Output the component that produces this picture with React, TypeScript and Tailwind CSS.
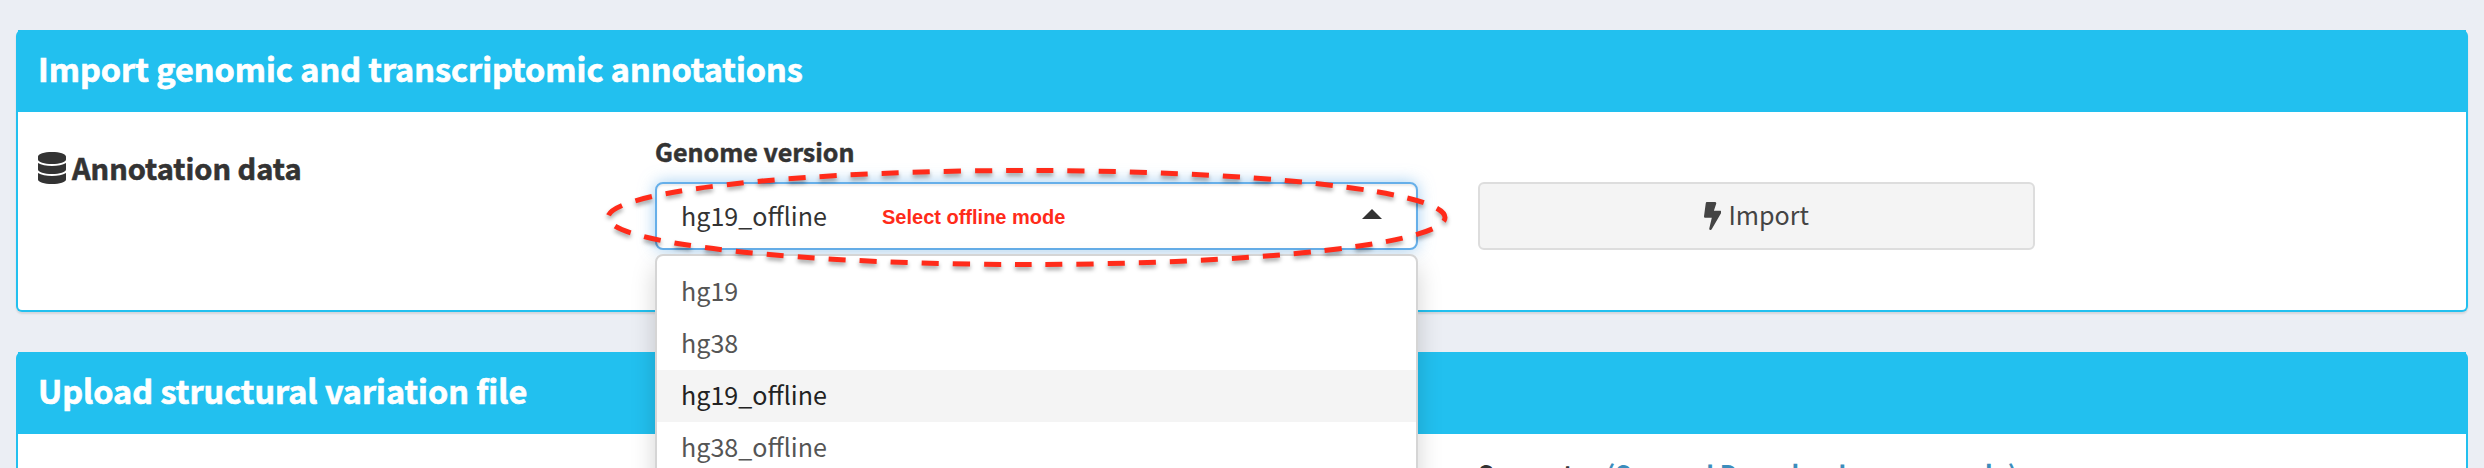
import { FaBolt, FaDatabase } from "react-icons/fa";

const options = ["hg19", "hg38", "hg19_offline", "hg38_offline"];

function BoxHeader({ title }: { title: string }) {
  return (
    <header className="flex h-[82px] items-center bg-[#22c0ef] pb-[6px] pl-5">
      <h3 className="text-[32.4px] leading-[40px] font-bold whitespace-nowrap text-white [-webkit-text-stroke:0.7px_white]">{title}</h3>
    </header>
  );
}

function GenomeSelect() {
  return (
    <div className="relative h-[68px] w-[763px]">
      <div className="flex h-full items-center justify-between rounded-lg border-2 border-[#66afe9] bg-white pr-[34px] pl-6 shadow-[inset_0_2px_2px_rgba(0,0,0,0.075),0_0_16px_rgba(102,175,233,0.6)]">
        <span className="-mt-[3px] text-[25.1px] leading-[40px]">hg19_offline</span>
        <svg className="-mt-[5px] h-[10px] w-5" viewBox="0 0 20 10">
          <path d="M0 10L10 0L20 10Z" fill="#333" />
        </svg>
      </div>
      <ul className="absolute top-[72px] left-0 z-10 w-full rounded-lg border-2 border-[#d5d5d5] bg-white pt-[10px] pb-[10px] shadow-[0_12px_24px_rgba(0,0,0,0.175)]">
        {options.map((o) => (
          <li
            key={o}
            className={
              o === "hg19_offline"
                ? "flex h-[52px] items-center bg-[#f4f4f4] pb-[2px] pl-6 text-[25.1px] text-[#222]"
                : "flex h-[52px] items-center pb-[2px] pl-6 text-[25.1px] text-[#555]"
            }
          >
            {o}
          </li>
        ))}
      </ul>
      <span className="absolute top-[23px] left-[227px] font-['Liberation_Sans',sans-serif] text-[20px] leading-6 font-bold whitespace-nowrap text-[#ff2b1a]">
        Select offline mode
      </span>
      <svg className="absolute -top-[22px] -left-[58px] z-20 h-[120px] w-[860px] drop-shadow-[0_3px_2px_rgba(0,0,0,0.35)]" viewBox="597 160 860 120">
        <ellipse
          cx="1026.5"
          cy="217.5"
          rx="418.5"
          ry="47"
          fill="none"
          stroke="#ff2b1a"
          strokeWidth="5"
          pathLength="55"
          strokeDasharray="0.55 0.45"
          strokeDashoffset="0.42"
        />
      </svg>
    </div>
  );
}

export default function App() {
  return (
    <div className="flex h-[468px] w-full flex-col gap-10 overflow-hidden bg-[#ebeef4] px-4 pt-[30px] font-['Noto_Sans_CJK_SC',sans-serif] text-[#333]">
      <section className="relative z-10 h-[282px] shrink-0 rounded-md border-2 border-t-0 border-[#22c0ef] bg-white shadow-[0_2px_2px_rgba(0,0,0,0.1)]">
        <BoxHeader title="Import genomic and transcriptomic annotations" />
        <div className="flex pl-5">
          <div className="flex w-[617px] items-start pt-[35px]">
            <FaDatabase className="mt-[5px] h-8 w-7" />
            <h4 className="ml-[6px] text-[29px] leading-[40px] font-bold [-webkit-text-stroke:0.6px_#333]">Annotation data</h4>
          </div>
          <div className="w-[823px] pt-[19px]">
            <label className="mb-[11px] block text-[25px] leading-[40px] font-bold [-webkit-text-stroke:0.5px_#333]">Genome version</label>
            <GenomeSelect />
          </div>
          <button className="mt-[70px] flex h-[68px] w-[557px] items-center justify-center gap-[7px] rounded-md border-2 border-[#ddd] bg-[#f4f4f4] text-[25.1px] text-[#444]">
            <FaBolt className="h-7 w-[17.5px]" />
            <span className="-mt-[2px]">Import</span>
          </button>
        </div>
      </section>
      <section className="h-[300px] shrink-0 rounded-md border-2 border-t-0 border-[#22c0ef] bg-white">
        <BoxHeader title="Upload structural variation file" />
        <div className="flex gap-[6px] pt-[19px] pl-[1460px] text-[25px] leading-[40px] font-bold whitespace-nowrap">
          <span>Separator</span>
          <span className="tracking-[0.2px] text-[#3c8dbc]">(See and Download our example)</span>
        </div>
      </section>
    </div>
  );
}
